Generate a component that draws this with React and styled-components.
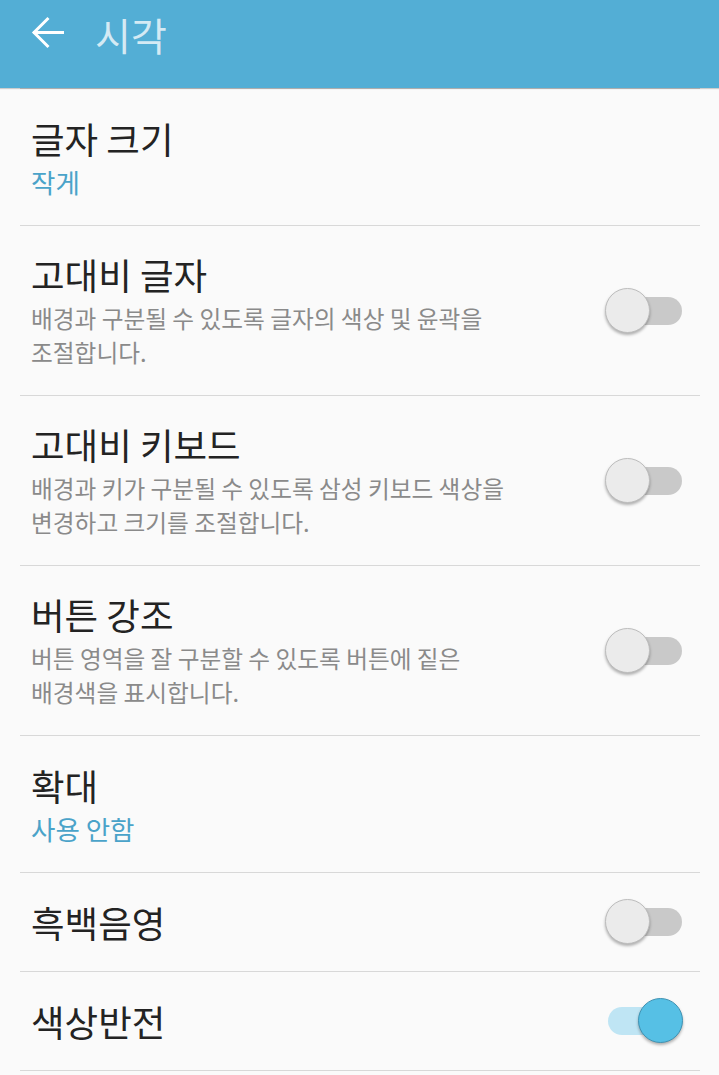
import React from 'react'
import styled, { createGlobalStyle } from 'styled-components'

const GlobalStyle = createGlobalStyle`
  html, body {
    margin: 0;
    padding: 0;
    background: #fafafa;
  }
  body {
    font-family: "Noto Sans CJK KR", "Noto Sans", sans-serif;
  }
`

const Page = styled.div`
  width: 719px;
  min-height: 1075px;
  background: #fafafa;
  overflow: hidden;
`

const Header = styled.header`
  height: 88px;
  background: #53aed5;
  box-shadow: 0 1px 1px rgba(0, 0, 0, 0.18);
  position: relative;
  z-index: 1;
`

const Toolbar = styled.div`
  height: 66px;
  display: flex;
  align-items: center;
  padding-left: 31px;
  gap: 30px;
`

const BackButton = styled.button`
  border: 0;
  background: none;
  padding: 0;
  width: 34px;
  height: 34px;
  display: flex;
  cursor: pointer;
`

const Title = styled.h1`
  margin: 0;
  font-size: 39px;
  font-weight: 400;
  color: rgba(255, 255, 255, 0.75);
  line-height: 1;
  padding-top: 3px;
`

const List = styled.div`
  margin: 0 19px 0 20px;
  border-top: 1px solid #d4d4d4;
`

const Row = styled.div`
  display: flex;
  align-items: center;
  border-bottom: 1px solid #d8d8d8;
  padding-left: 11px;
  height: ${p => p.$h}px;
  box-sizing: border-box;
`

const TextBlock = styled.div`
  flex: 1;
  padding-top: 2px;
`

const Label = styled.div`
  font-size: 36.5px;
  line-height: 42px;
  color: #232323;
`

const Value = styled.div`
  margin-top: 5px;
  font-size: 26.5px;
  line-height: 34px;
  color: #4aa3c9;
`

const Desc = styled.div`
  margin-top: 5px;
  font-size: 23.7px;
  line-height: 34px;
  color: #8a8a8a;
  max-width: 500px;
  word-break: keep-all;
`

const Switch = styled.div`
  position: relative;
  flex: none;
  width: 77px;
  height: 46px;
  margin: 0 18px 0 12px;
`

const Track = styled.div`
  position: absolute;
  left: 3px;
  right: 0;
  top: 9px;
  height: 28px;
  border-radius: 14px;
  background: ${p => (p.$on ? '#bfe5f4' : '#c9c9c9')};
`

const Thumb = styled.div`
  position: absolute;
  top: 0;
  ${p => (p.$on ? 'right: -1px;' : 'left: 0;')}
  width: 45px;
  height: 45px;
  box-sizing: border-box;
  border-radius: 50%;
  background: ${p => (p.$on ? '#56c0e5' : '#ebebeb')};
  border: 1px solid ${p => (p.$on ? '#3f93b4' : '#bdbdbd')};
  box-shadow: 0 2px 3px rgba(0, 0, 0, 0.3);
`

const Toggle = ({ on }) => (
  <Switch>
    <Track $on={on} />
    <Thumb $on={on} />
  </Switch>
)

const items = [
  { label: '글자 크기', value: '작게' },
  { label: '고대비 글자', desc: '배경과 구분될 수 있도록 글자의 색상 및 윤곽을 조절합니다.', toggle: false },
  { label: '고대비 키보드', desc: '배경과 키가 구분될 수 있도록 삼성 키보드 색상을 변경하고 크기를 조절합니다.', toggle: false },
  { label: '버튼 강조', desc: '버튼 영역을 잘 구분할 수 있도록 버튼에 짙은 배경색을 표시합니다.', toggle: false },
  { label: '확대', value: '사용 안함' },
  { label: '흑백음영', toggle: false },
  { label: '색상반전', toggle: true },
]

const rowHeight = item => (item.desc ? 170 : item.value ? 137 : 99)

export default function App() {
  return (
    <Page>
      <GlobalStyle />
      <Header>
        <Toolbar>
          <BackButton aria-label="뒤로">
            <svg width="34" height="34" viewBox="0 0 34 34" fill="none" stroke="#fff" strokeWidth="3">
              <path d="M2 16.5H33" />
              <path d="M17.5 2L3 16.5L17.5 31" />
            </svg>
          </BackButton>
          <Title>시각</Title>
        </Toolbar>
      </Header>
      <List>
        {items.map(item => (
          <Row key={item.label} $h={rowHeight(item)}>
            <TextBlock>
              <Label>{item.label}</Label>
              {item.value && <Value>{item.value}</Value>}
              {item.desc && <Desc>{item.desc}</Desc>}
            </TextBlock>
            {item.toggle !== undefined && <Toggle on={item.toggle} />}
          </Row>
        ))}
      </List>
    </Page>
  )
}
